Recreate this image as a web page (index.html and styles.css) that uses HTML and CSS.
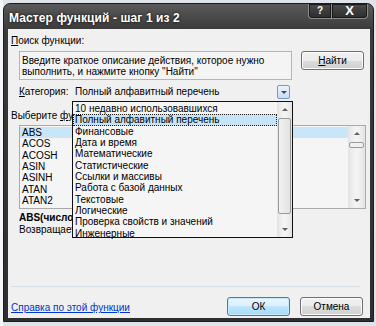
FILE: index.html
```
<!DOCTYPE html>
<html lang="ru">
<head>
  <meta charset="UTF-8" />
  <title>Мастер функций</title>
  <link rel="stylesheet" href="styles.css">
</head>
<body>
  <div class="desk">
    <div class="window">
      <div class="titlebar">
        <span class="title">Мастер функций - шаг 1 из 2</span>
        <div class="caps">
          <span class="cap help">?</span>
          <span class="cap close">X</span>
        </div>
      </div>

      <div class="client">
        <div class="label"><u>П</u>оиск функции:</div>

        <div class="search-row">
          <div class="search">Введите краткое описание действия, которое нужно<br>выполнить, и нажмите кнопку "Найти"</div>
          <span class="btn find"><u>Н</u>айти</span>
        </div>

        <div class="cat-row">
          <span class="cat-label"><u>К</u>атегория:</span>
          <div class="combo">
            <span>Полный алфавитный перечень</span>
            <span class="combo-arrow"></span>

            <div class="drop">
              <ul class="drop-items">
                <li>10 недавно использовавшихся</li>
                <li class="sel">Полный алфавитный перечень</li>
                <li>Финансовые</li>
                <li>Дата и время</li>
                <li>Математические</li>
                <li>Статистические</li>
                <li>Ссылки и массивы</li>
                <li>Работа с базой данных</li>
                <li>Текстовые</li>
                <li>Логические</li>
                <li>Проверка свойств и значений</li>
                <li>Инженерные</li>
              </ul>
              <div class="sbar drop-bar">
                <span class="arr up"></span>
                <span class="thumb"></span>
                <span class="track"></span>
                <span class="arr down"></span>
              </div>
            </div>
          </div>
        </div>

        <div class="label pick">Выберите <u>ф</u>ункцию:</div>

        <div class="listbox">
          <ul class="fn-items">
            <li class="sel">ABS</li>
            <li>ACOS</li>
            <li>ACOSH</li>
            <li>ASIN</li>
            <li>ASINH</li>
            <li>ATAN</li>
            <li>ATAN2</li>
          </ul>
          <div class="sbar list-bar">
            <span class="arr up"></span>
            <span class="thumb"></span>
            <span class="track"></span>
            <span class="arr down"></span>
          </div>
        </div>

        <div class="syntax">ABS(число)</div>
        <div class="descr">Возвращает модуль (абсолютную величину) числа.</div>

        <div class="sep"></div>

        <div class="foot">
          <a class="help-link" href="#">Справка по этой функции</a>
          <span class="btn ok">ОК</span>
          <span class="btn">Отмена</span>
        </div>
      </div>
    </div>
  </div>
</body>
</html>
```

FILE: styles.css
```
* {
  margin: 0;
  padding: 0;
  box-sizing: border-box;
}

body {
  width: 376px;
  height: 326px;
  overflow: hidden;
  font-family: "Liberation Sans", Arial, sans-serif;
  font-size: 10px;
  color: #000;
}

ul {
  list-style: none;
}

u {
  text-decoration: underline;
}

.desk {
  width: 376px;
  height: 326px;
  padding: 3px 0 0 3px;
  background: linear-gradient(90deg, #f4f6f9 0, #f4f6f9 3px, #dfe4ea 3px);
}

.window {
  width: 371px;
  height: 319px;
  background: linear-gradient(#5a5a5a, #3a3a3a 26px, #2e2e2e);
  border-radius: 7px 7px 0 0;
  border: 1px solid #1c1c1c;
  padding: 0 3px 4px 4px;
}

.titlebar {
  height: 25px;
  display: flex;
  align-items: flex-start;
  justify-content: space-between;
}

.title {
  margin: 7px 0 0 1px;
  color: #fff;
  font-weight: bold;
  font-size: 12px;
  letter-spacing: 0.1px;
  text-shadow: 0 0 3px #000;
}

.caps {
  display: flex;
  margin-right: 2px;
}

.cap {
  height: 15px;
  border: 1px solid #8c8c8c;
  border-top: 0;
  background: linear-gradient(#4c4c4c, #2c2c2c);
  color: #fff;
  font-weight: bold;
  line-height: 14px;
  text-align: center;
  box-shadow: inset 0 0 0 1px #1a1a1a;
}

.cap.help {
  width: 24px;
  border-radius: 0 0 0 4px;
  font-size: 10px;
}

.cap.close {
  width: 36px;
  border-left: 0;
  border-radius: 0 0 4px 0;
  font-size: 13px;
}

.client {
  height: 289px;
  background: #f0f0f0;
  padding: 5px 0 0 3px;
  position: relative;
}

.label {
  line-height: 13px;
  height: 13px;
}

.search-row {
  display: flex;
  margin: 4px 0 0 8px;
}

.search {
  width: 273px;
  height: 29px;
  border: 1px solid #b5b5b5;
  background: #f4f4f4;
  padding: 3px 0 0 2px;
  line-height: 11px;
}

.btn {
  display: block;
  width: 63px;
  height: 19px;
  border: 1px solid #707070;
  border-radius: 3px;
  background: linear-gradient(#f2f2f2 0, #ebebeb 50%, #dddddd 50%, #cfcfcf 100%);
  box-shadow: inset 0 0 0 1px #fcfcfc;
  text-align: center;
  line-height: 17px;
}

.find {
  margin-left: 9px;
}

.cat-row {
  display: flex;
  align-items: center;
  margin: 4px 0 0 8px;
  height: 15px;
}

.cat-label {
  width: 53px;
}

.combo {
  position: relative;
  width: 218px;
  height: 15px;
  padding-left: 3px;
  display: flex;
  align-items: center;
  justify-content: space-between;
}

.combo-arrow {
  width: 13px;
  height: 14px;
  margin-top: 1px;
  border: 1px solid #7a98c7;
  border-radius: 2px;
  background: linear-gradient(#eef4fb, #c9dbf1);
  position: relative;
}

.combo-arrow::after {
  content: "";
  position: absolute;
  left: 3px;
  top: 5px;
  border: 3px solid transparent;
  border-top: 3px solid #3b4a66;
  border-width: 3px 3px 0;
}

.drop {
  position: absolute;
  left: 0;
  top: 17px;
  width: 221px;
  height: 137px;
  border: 1px solid #111;
  background: #f5f5f5;
  display: flex;
  z-index: 2;
}

.drop-items {
  flex: 1;
  padding-top: 1px;
}

.drop-items li {
  height: 11.33px;
  line-height: 11px;
  padding-left: 2px;
  white-space: nowrap;
}

.drop-items li.sel {
  background: #c6e4f6;
  outline: 1px dotted #222;
  outline-offset: -1px;
}

.sbar {
  display: flex;
  flex-direction: column;
  align-items: center;
  background: linear-gradient(90deg, #e3e3e3, #f3f3f3 40%, #f3f3f3 60%, #e3e3e3);
}

.drop-bar {
  width: 15px;
}

.arr {
  width: 100%;
  height: 15px;
  position: relative;
  flex: none;
}

.arr::after {
  content: "";
  position: absolute;
  left: 50%;
  top: 6px;
  margin-left: -3px;
  border: 3px solid transparent;
}

.arr.up::after {
  border-width: 0 3px 3px;
  border-bottom-color: #606060;
}

.arr.down::after {
  border-width: 3px 3px 0;
  border-top-color: #606060;
}

.drop-bar .thumb {
  height: 96px;
  width: 13px;
  margin-top: 1px;
  border: 1px solid #9a9a9a;
  border-radius: 2px;
  background: linear-gradient(90deg, #f2f2f2, #e2e2e2);
}

.track {
  flex: 1;
}

.pick {
  margin-top: 10px;
}

.listbox {
  display: flex;
  width: 347px;
  height: 84px;
  margin: 3px 0 0 8px;
  border: 1px solid #aaaaaa;
  background: #f5f5f5;
}

.fn-items {
  flex: 1;
  padding-top: 1px;
}

.fn-items li {
  height: 11.33px;
  line-height: 11px;
  padding-left: 2px;
}

.fn-items li.sel {
  background: #c8e6f8;
}

.list-bar {
  width: 17px;
}

.list-bar .thumb {
  height: 6px;
  width: 15px;
  margin-top: 1px;
  border: 1px solid #9a9a9a;
  border-radius: 2px;
  background: #f0f0f0;
}

.syntax {
  margin: 3px 0 0 8px;
  font-weight: bold;
  line-height: 12px;
}

.descr {
  margin: 0 0 0 8px;
  line-height: 12px;
  white-space: nowrap;
}

.sep {
  margin: 50px 0 0 0;
  width: 349px;
  height: 1px;
  background: #d5dfe5;
}

.foot {
  display: flex;
  align-items: center;
  margin-top: 10px;
}

.help-link {
  color: #0033cc;
  text-decoration: underline;
  margin-right: auto;
  margin-top: 2px;
}

.btn.ok {
  border-color: #3c7fb1;
  background: linear-gradient(#eaf6fd 0, #d9f0fc 50%, #bee6fd 50%, #a7d9f5 100%);
  box-shadow: inset 0 0 0 1px #c7e9fc;
  margin-right: 10px;
}

.foot .btn:last-child {
  margin-right: 7px;
}
```
